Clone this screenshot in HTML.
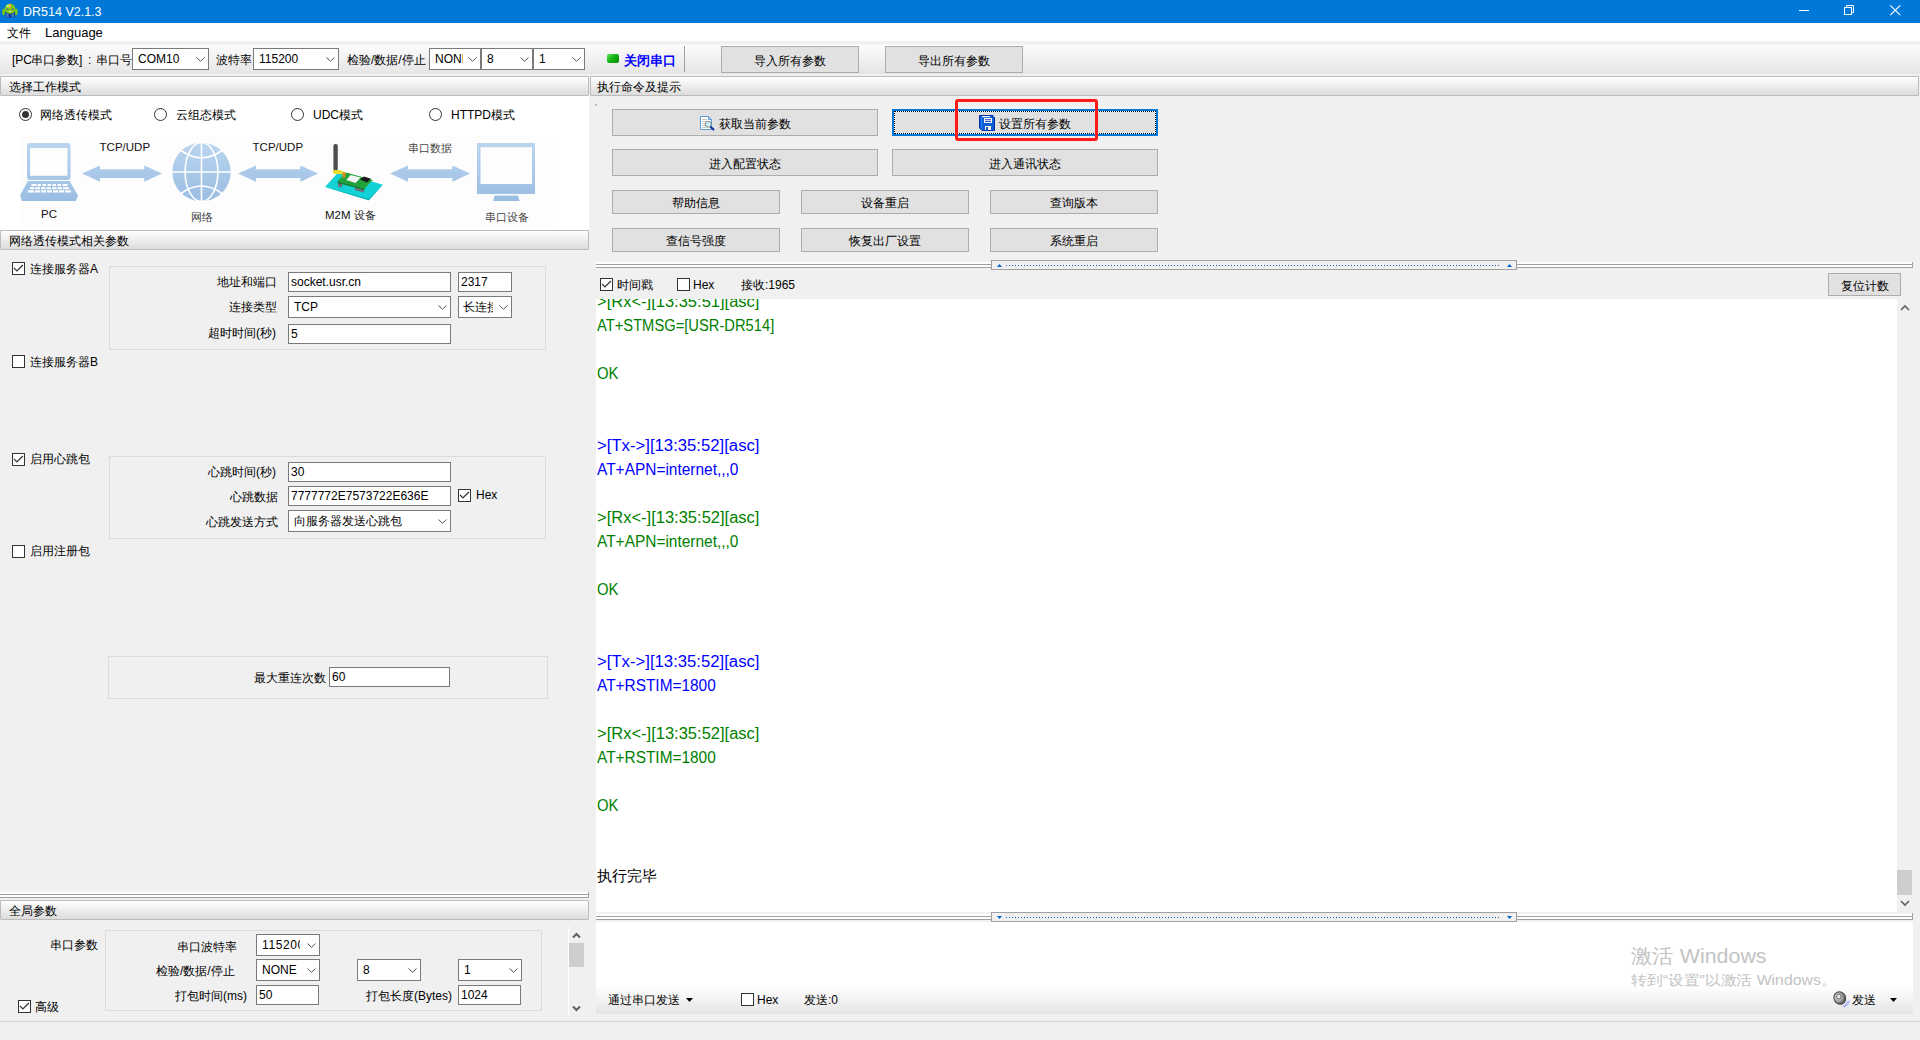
<!DOCTYPE html>
<html><head><meta charset="utf-8">
<style>
*{box-sizing:border-box}
html,body{margin:0;padding:0;width:1920px;height:1040px;overflow:hidden;background:#f0f0f0;font-family:"Liberation Sans",sans-serif;font-size:12px;color:#000}
.a{position:absolute}
.t{position:absolute;white-space:nowrap;line-height:12px;height:12px}
.hdr{position:absolute;height:20px;border:1px solid #bcbcbc;border-radius:1px;background:linear-gradient(#fefefe,#dddddd)}
.hdr span{position:absolute;left:8px;top:4px;line-height:12px;white-space:nowrap}
.btn{position:absolute;border:1px solid #adadad;background:#e1e1e1;text-align:center;white-space:nowrap}
.btn span{position:absolute;left:0;right:0;line-height:12px}
.cmb{position:absolute;border:1px solid #7a7a7a;background:#fff;white-space:nowrap;overflow:hidden}
.cmb span{position:absolute;left:5px;line-height:12px}
.cmb svg{position:absolute}
.inp{position:absolute;border:1px solid #7a7a7a;background:#fff;white-space:nowrap;overflow:hidden}
.inp span{position:absolute;left:3px;line-height:12px}
.chk{position:absolute;width:13px;height:13px;border:1px solid #333;background:#fff}
.rad{position:absolute;width:13px;height:13px;border:1px solid #333;border-radius:50%;background:#fff}
.grp{position:absolute;border:1px solid #dcdcdc}
.log{position:absolute;left:597px;white-space:nowrap;font-size:15px;line-height:24px;height:24px}
.g{color:#008000}.b{color:#0000ff}
</style></head><body><!-- title bar -->
<div class="a" style="left:0;top:0;width:1920px;height:23px;background:#0078d7"></div>
<svg class="a" style="left:0;top:0" width="22" height="22" viewBox="0 0 22 22">
<ellipse cx="3.7" cy="11.8" rx="1.5" ry="3.4" fill="#78c814"/><ellipse cx="16.2" cy="11.8" rx="1.5" ry="3.4" fill="#78c814"/>
<rect x="5.5" y="12" width="9.5" height="5.5" rx="1" fill="#173a96"/><rect x="6.2" y="13.5" width="2.3" height="3.5" fill="#4a86cc"/><rect x="11.6" y="13.5" width="2.3" height="3.5" fill="#4a86cc"/>
<ellipse cx="10" cy="8.7" rx="5.2" ry="5" fill="#7ccc10"/><ellipse cx="8.5" cy="6" rx="2" ry="1.2" fill="#c8f090"/>
<rect x="9.1" y="3.8" width="1.9" height="4" rx="0.8" fill="#f4a848"/>
<circle cx="7.5" cy="9.2" r="0.9" fill="#6a5ab0"/><circle cx="12.5" cy="9.2" r="0.9" fill="#6a5ab0"/>
<ellipse cx="9.9" cy="11.5" rx="1.2" ry="0.5" fill="#eee"/>
</svg>
<div class="t" style="left:23px;top:6px;color:#fff;font-size:12.5px;line-height:13px">DR514 V2.1.3</div>
<svg class="a" style="left:1790px;top:0" width="130" height="23" viewBox="0 0 130 23">
<rect x="9" y="10" width="10" height="1" fill="#fff"/>
<rect x="54.5" y="7.5" width="7" height="7" fill="none" stroke="#fff"/><path d="M56.5 7.5V5.5H63.5V12.5H61.5" fill="none" stroke="#fff"/>
<path d="M100.3 5.3L110.2 15.2M110.2 5.3L100.3 15.2" stroke="#fff" stroke-width="1.15"/></svg>
<!-- menu -->
<div class="a" style="left:0;top:23px;width:1920px;height:18px;background:#fff"></div>
<div class="t" style="left:7px;top:27px">文件</div>
<div class="t" style="left:45px;top:27px;font-size:13px">Language</div>
<!-- toolbar -->

<div class="a" style="left:0;top:41px;width:1920px;height:35px;background:linear-gradient(#f0f0f0 0,#f0f0f0 3px,#fcfcfc 4px,#e5e5e5 33px,#f0f0f0 33px)"></div>
<div class="t" style="left:12px;top:54px;">[PC</div>
<div class="t" style="left:31px;top:54px;">串口参数</div>
<div class="t" style="left:79px;top:54px;">]</div>
<div class="t" style="left:88px;top:54px;">:</div>
<div class="t" style="left:96px;top:54px;">串口号</div>
<div class="cmb" style="left:132px;top:48px;width:77px;height:22px"><span style="left:5px;top:4px;width:52px;overflow:hidden;">COM10</span><svg style="right:3px;top:8px" width="9" height="5" viewBox="0 0 9 5"><path d="M0.5 0.5L4.5 4.3L8.5 0.5" fill="none" stroke="#505050" stroke-width="1"/></svg></div>
<div class="t" style="left:216px;top:54px;">波特率</div>
<div class="cmb" style="left:253px;top:48px;width:86px;height:22px"><span style="left:5px;top:4px;width:61px;overflow:hidden;">115200</span><svg style="right:3px;top:8px" width="9" height="5" viewBox="0 0 9 5"><path d="M0.5 0.5L4.5 4.3L8.5 0.5" fill="none" stroke="#505050" stroke-width="1"/></svg></div>
<div class="t" style="left:347px;top:54px;">检验/数据/停止</div>
<div class="cmb" style="left:429px;top:48px;width:52px;height:22px"><span style="left:5px;top:4px;width:28px;overflow:hidden;">NONE</span><svg style="right:3px;top:8px" width="9" height="5" viewBox="0 0 9 5"><path d="M0.5 0.5L4.5 4.3L8.5 0.5" fill="none" stroke="#505050" stroke-width="1"/></svg></div>
<div class="cmb" style="left:481px;top:48px;width:52px;height:22px"><span style="left:5px;top:4px;width:27px;overflow:hidden;">8</span><svg style="right:3px;top:8px" width="9" height="5" viewBox="0 0 9 5"><path d="M0.5 0.5L4.5 4.3L8.5 0.5" fill="none" stroke="#505050" stroke-width="1"/></svg></div>
<div class="cmb" style="left:533px;top:48px;width:52px;height:22px"><span style="left:5px;top:4px;width:27px;overflow:hidden;">1</span><svg style="right:3px;top:8px" width="9" height="5" viewBox="0 0 9 5"><path d="M0.5 0.5L4.5 4.3L8.5 0.5" fill="none" stroke="#505050" stroke-width="1"/></svg></div>
<div class="a" style="left:607px;top:54px;width:12px;height:9px;border-radius:2px;background:linear-gradient(135deg,#5fe05f,#10b010 50%,#0a8a0a)"></div>
<div class="t" style="left:624px;top:54px;color:#0000ff;font-weight:bold;font-size:13px;line-height:13px;height:13px">关闭串口</div>
<div class="a" style="left:684px;top:46px;width:1px;height:26px;background:#a0a0a0"></div>
<div class="btn" style="left:721px;top:46px;width:138px;height:27px"></div>
<div class="t" style="left:754px;top:55px;">导入所有参数</div>
<div class="btn" style="left:885px;top:46px;width:138px;height:27px"></div>
<div class="t" style="left:918px;top:55px;">导出所有参数</div>
<div class="a" style="left:0;top:96px;width:589px;height:134px;background:#fff"></div>
<div class="hdr" style="left:0;top:76px;width:589px"><span>选择工作模式</span></div>
<div class="a" style="left:595px;top:104px;width:2px;height:2px;background:#b0b0b0;border-radius:1px"></div>
<div class="hdr" style="left:590px;top:76px;width:1329px"><span style="left:6px">执行命令及提示</span></div>
<div class="rad" style="left:19px;top:108px"><div class="a" style="left:2px;top:2px;width:7px;height:7px;border-radius:50%;background:#333"></div></div>
<div class="t" style="left:40px;top:109px;">网络透传模式</div>
<div class="rad" style="left:154px;top:108px"></div>
<div class="t" style="left:176px;top:109px;">云组态模式</div>
<div class="rad" style="left:291px;top:108px"></div>
<div class="t" style="left:313px;top:109px;">UDC模式</div>
<div class="rad" style="left:429px;top:108px"></div>
<div class="t" style="left:451px;top:109px;">HTTPD模式</div>
<svg class="a" style="left:0;top:130px" width="590" height="100" viewBox="0 130 590 100">
<defs><linearGradient id="lb" x1="0" y1="0" x2="0" y2="1"><stop offset="0" stop-color="#bad5ef"/><stop offset="1" stop-color="#9bbde3"/></linearGradient>
<linearGradient id="lbg" gradientUnits="userSpaceOnUse" x1="0" y1="143" x2="0" y2="201"><stop offset="0" stop-color="#bad5ef"/><stop offset="1" stop-color="#9bbde3"/></linearGradient></defs>
<rect x="20" y="136" width="533" height="93" fill="#fdfdfd"/>
<g fill="url(#lbg)">
<path d="M30 143H67.5A3 3 0 0 1 70.5 146V177A3 3 0 0 1 67.5 180H30A3 3 0 0 1 27 177V146A3 3 0 0 1 30 143ZM30 148V175.7H67.5V148Z" fill-rule="evenodd"/>
<path d="M27.8 181H69.5L78 195.5L76 201H22L20 195.5Z"/>
<path d="M82 173.6L100 165.4V169.3H144.3V165.4L162.1 173.6L144.3 181.8V177.9H100V181.8Z"/>
<path d="M238 173.6L256 165.4V169.3H300.3V165.4L318.1 173.6L300.3 181.8V177.9H256V181.8Z"/>
<path d="M390 173.6L408 165.4V169.3H452.3V165.4L470.1 173.6L452.3 181.8V177.9H408V181.8Z"/>
<circle cx="201.5" cy="172" r="29.2"/>
<path d="M477 143H535V194H477ZM480.5 147.2V184H532V147.2Z" fill-rule="evenodd"/>
<path d="M494.7 195.6H518L519.7 201H493Z"/>
</g>
<g fill="#fff">
<rect x="31.5" y="184" width="5" height="2"/><rect x="37.5" y="184" width="3.5" height="2"/><rect x="42.5" y="184" width="3.5" height="2"/><rect x="47.5" y="184" width="3.5" height="2"/><rect x="52.5" y="184" width="3.5" height="2"/><rect x="57.5" y="184" width="3.5" height="2"/><rect x="62.5" y="184" width="5" height="2"/>
<rect x="30" y="187.2" width="4.5" height="2"/><rect x="35.5" y="187.2" width="4.5" height="2"/><rect x="41" y="187.2" width="4.5" height="2"/><rect x="46.5" y="187.2" width="4.5" height="2"/><rect x="52" y="187.2" width="4.5" height="2"/><rect x="57.5" y="187.2" width="4.5" height="2"/><rect x="63" y="187.2" width="6" height="2"/>
<rect x="28" y="190.3" width="6" height="2.2"/><rect x="35" y="190.3" width="5" height="2.2"/><rect x="41" y="190.3" width="5" height="2.2"/><rect x="47" y="190.3" width="5" height="2.2"/><rect x="53" y="190.3" width="5" height="2.2"/><rect x="59" y="190.3" width="5" height="2.2"/><rect x="65" y="190.3" width="6" height="2.2"/>
</g>
<g fill="none" stroke="#fff" stroke-width="1.6">
<path d="M201.5 142V202M171 172H232"/>
<ellipse cx="201.5" cy="172" rx="16.4" ry="29.5"/>
<path d="M181 150.5Q201.5 165 222 150.5M181 193.5Q201.5 178.5 222 193.5"/>
</g>
<path d="M325 187L339 171.4L382.8 184.7L368.8 200.3Z" fill="#12d2d6"/>
<path d="M325 187L368.8 200.3L382.8 184.7L368.8 199Z" fill="#0aa8b0"/>
<path d="M338 183L342 183L342 187.5L338 186.5Z" fill="#6d6a7c"/>
<path d="M355 187L364 189.5L364 192.5L355 190Z" fill="#6d6a7c"/>
<path d="M337.5 181.3L346 172.5L372.8 180L364.7 188.5Z" fill="#22a33a"/>
<path d="M337.5 181.3L364.7 188.5L364.7 190L337.5 183Z" fill="#157a25"/>
<path d="M346.3 180L350.6 175L360.6 177.5L355.6 183.1Z" fill="#f4f4f4"/>
<path d="M360 179.5L364 176.5L371 178.8L367 182.5Z" fill="#1c1c1c"/>
<rect x="333.4" y="144" width="4.4" height="27" rx="2" fill="#4e4e4e"/>
<path d="M333 170L340 170L345.5 172.5L345.5 174.5L338 174L333 173.5Z" fill="#e8dc2a"/>
<rect x="342.5" y="172.5" width="3" height="5" fill="#d88a20"/>
<g font-family="Liberation Sans" font-size="11.5px" fill="#111">
<text x="99.6" y="151.2">TCP/UDP</text><text x="252.6" y="151.2">TCP/UDP</text>
<text x="41" y="217.5">PC</text><text x="325" y="218.5">M2M</text>
</g>
<g font-size="11px" fill="#444">
<text x="190.5" y="220.5">网络</text><text x="408" y="151.5">串口数据</text><text x="484.5" y="221">串口设备</text><text x="354" y="218.5" fill="#222">设备</text>
</g>
</svg>
<div class="hdr" style="left:0;top:230px;width:589px"><span>网络透传模式相关参数</span></div>
<div class="chk" style="left:12px;top:262px"><svg class="a" style="left:0;top:0" width="11" height="11" viewBox="0 0 11 11"><path d="M1 4.9L3.9 7.9L9.9 2" fill="none" stroke="#333" stroke-width="1.3"/></svg></div>
<div class="t" style="left:30px;top:263px;">连接服务器A</div>
<div class="grp" style="left:109px;top:266px;width:437px;height:84px"></div>
<div class="t" style="left:217px;top:276px;">地址和端口</div>
<div class="inp" style="left:288px;top:272px;width:163px;height:20px"><span style="left:2px;top:3px">socket.usr.cn</span></div>
<div class="inp" style="left:458px;top:272px;width:54px;height:20px"><span style="left:2px;top:3px">2317</span></div>
<div class="t" style="left:229px;top:301px;">连接类型</div>
<div class="cmb" style="left:288px;top:296px;width:163px;height:22px"><span style="left:5px;top:4px;width:138px;overflow:hidden;">TCP</span><svg style="right:3px;top:8px" width="9" height="5" viewBox="0 0 9 5"><path d="M0.5 0.5L4.5 4.3L8.5 0.5" fill="none" stroke="#505050" stroke-width="1"/></svg></div>
<div class="cmb" style="left:458px;top:296px;width:54px;height:22px"><span style="left:4px;top:4px;width:30px;overflow:hidden;">长连接</span><svg style="right:3px;top:8px" width="9" height="5" viewBox="0 0 9 5"><path d="M0.5 0.5L4.5 4.3L8.5 0.5" fill="none" stroke="#505050" stroke-width="1"/></svg></div>
<div class="t" style="left:208px;top:327px;">超时时间(秒)</div>
<div class="inp" style="left:288px;top:324px;width:163px;height:20px"><span style="left:2px;top:3px">5</span></div>
<div class="chk" style="left:12px;top:355px"></div>
<div class="t" style="left:30px;top:356px;">连接服务器B</div>
<div class="chk" style="left:12px;top:453px"><svg class="a" style="left:0;top:0" width="11" height="11" viewBox="0 0 11 11"><path d="M1 4.9L3.9 7.9L9.9 2" fill="none" stroke="#333" stroke-width="1.3"/></svg></div>
<div class="t" style="left:30px;top:453px;">启用心跳包</div>
<div class="grp" style="left:109px;top:456px;width:437px;height:83px"></div>
<div class="t" style="left:208px;top:466px;">心跳时间(秒)</div>
<div class="inp" style="left:288px;top:462px;width:163px;height:20px"><span style="left:2px;top:3px">30</span></div>
<div class="t" style="left:230px;top:491px;">心跳数据</div>
<div class="inp" style="left:288px;top:486px;width:163px;height:20px"><span style="left:2px;top:3px">7777772E7573722E636E</span></div>
<div class="chk" style="left:458px;top:489px"><svg class="a" style="left:0;top:0" width="11" height="11" viewBox="0 0 11 11"><path d="M1 4.9L3.9 7.9L9.9 2" fill="none" stroke="#333" stroke-width="1.3"/></svg></div>
<div class="t" style="left:476px;top:489px;">Hex</div>
<div class="t" style="left:206px;top:516px;">心跳发送方式</div>
<div class="cmb" style="left:288px;top:510px;width:163px;height:22px"><span style="left:5px;top:4px;width:138px;overflow:hidden;">向服务器发送心跳包</span><svg style="right:3px;top:8px" width="9" height="5" viewBox="0 0 9 5"><path d="M0.5 0.5L4.5 4.3L8.5 0.5" fill="none" stroke="#505050" stroke-width="1"/></svg></div>
<div class="chk" style="left:12px;top:545px"></div>
<div class="t" style="left:30px;top:545px;">启用注册包</div>
<div class="grp" style="left:108px;top:656px;width:440px;height:43px"></div>
<div class="t" style="left:254px;top:672px;">最大重连次数</div>
<div class="inp" style="left:329px;top:667px;width:121px;height:20px"><span style="left:2px;top:3px">60</span></div>
<div class="a" style="left:0;top:892px;width:588px;height:6px;background:linear-gradient(#fff 0,#fff 2px,#a0a0a0 2px,#a0a0a0 3px,#fff 3px,#fff 5px,#a0a0a0 5px)"></div>
<div class="a" style="left:588px;top:892px;width:1px;height:6px;background:#a0a0a0"></div>
<div class="hdr" style="left:0;top:900px;width:589px"><span>全局参数</span></div>
<div class="t" style="left:50px;top:939px;">串口参数</div>
<div class="grp" style="left:105px;top:930px;width:437px;height:81px"></div>
<div class="t" style="left:177px;top:941px;">串口波特率</div>
<div class="cmb" style="left:256px;top:934px;width:64px;height:22px"><span style="left:5px;top:4px;width:38px;overflow:hidden;letter-spacing:0.6px;">115200</span><svg style="right:3px;top:8px" width="9" height="5" viewBox="0 0 9 5"><path d="M0.5 0.5L4.5 4.3L8.5 0.5" fill="none" stroke="#505050" stroke-width="1"/></svg></div>
<div class="t" style="left:156px;top:965px;">检验/数据/停止</div>
<div class="cmb" style="left:256px;top:959px;width:64px;height:22px"><span style="left:5px;top:4px;width:39px;overflow:hidden;">NONE</span><svg style="right:3px;top:8px" width="9" height="5" viewBox="0 0 9 5"><path d="M0.5 0.5L4.5 4.3L8.5 0.5" fill="none" stroke="#505050" stroke-width="1"/></svg></div>
<div class="cmb" style="left:357px;top:959px;width:64px;height:22px"><span style="left:5px;top:4px;width:39px;overflow:hidden;">8</span><svg style="right:3px;top:8px" width="9" height="5" viewBox="0 0 9 5"><path d="M0.5 0.5L4.5 4.3L8.5 0.5" fill="none" stroke="#505050" stroke-width="1"/></svg></div>
<div class="cmb" style="left:458px;top:959px;width:64px;height:22px"><span style="left:5px;top:4px;width:39px;overflow:hidden;">1</span><svg style="right:3px;top:8px" width="9" height="5" viewBox="0 0 9 5"><path d="M0.5 0.5L4.5 4.3L8.5 0.5" fill="none" stroke="#505050" stroke-width="1"/></svg></div>
<div class="t" style="left:175px;top:990px;">打包时间(ms)</div>
<div class="inp" style="left:256px;top:985px;width:63px;height:20px"><span style="left:2px;top:3px">50</span></div>
<div class="t" style="left:366px;top:990px;">打包长度(Bytes)</div>
<div class="inp" style="left:458px;top:985px;width:63px;height:20px"><span style="left:2px;top:3px">1024</span></div>
<div class="chk" style="left:18px;top:1000px"><svg class="a" style="left:0;top:0" width="11" height="11" viewBox="0 0 11 11"><path d="M1 4.9L3.9 7.9L9.9 2" fill="none" stroke="#333" stroke-width="1.3"/></svg></div>
<div class="t" style="left:35px;top:1001px;">高级</div>
<div class="a" style="left:568px;top:926px;width:1px;height:90px;background:#fff"></div>
<div class="a" style="left:569px;top:943px;width:15px;height:24px;background:#cdcdcd"></div>
<svg class="a" style="left:572px;top:932px" width="10" height="7" viewBox="0 0 10 7"><path d="M1 5.5L4.5 2L8 5.5" fill="none" stroke="#606060" stroke-width="2"/></svg>
<svg class="a" style="left:572px;top:1005px" width="10" height="7" viewBox="0 0 10 7"><path d="M1 1.5L4.5 5L8 1.5" fill="none" stroke="#606060" stroke-width="2"/></svg>
<div class="a" style="left:0;top:1021px;width:1920px;height:1px;background:#d6d6d6"></div>
<div class="btn" style="left:612px;top:109px;width:266px;height:27px"></div>
<div class="t" style="left:719px;top:118px;">获取当前参数</div>
<svg class="a" style="left:699px;top:115px" width="17" height="17" viewBox="699 115 17 17">
<path d="M700.5 116.5H708.5L711.5 119.5V129.5H700.5Z" fill="#fff" stroke="#5b9bd5"/>
<path d="M708.5 116.5V119.5H711.5" fill="none" stroke="#5b9bd5"/>
<g fill="#c8c8c8"><rect x="702" y="119" width="5" height="1"/><rect x="702" y="121" width="4" height="1"/><rect x="702" y="123" width="3" height="1"/><rect x="702" y="125" width="3" height="1"/><rect x="702" y="127" width="4" height="1"/></g>
<circle cx="708.3" cy="124.3" r="3" fill="#c8f4f8" stroke="#808080" stroke-width="1"/>
<path d="M710.5 126.8L714 130" stroke="#0a2aa8" stroke-width="2.2"/>
</svg>
<div class="a" style="left:892px;top:109px;width:266px;height:27px;border:2px solid #0078d7;background:#e1e1e1"></div>
<div class="a" style="left:894px;top:111px;width:262px;height:23px;border:1px solid #fff"></div>
<div class="a" style="left:894px;top:111px;width:262px;height:23px;border:1px dotted #000"></div>
<div class="t" style="left:999px;top:118px;">设置所有参数</div>
<svg class="a" style="left:978px;top:114px" width="18" height="18" viewBox="978 114 18 18">
<path d="M979.5 115.5H993V117.5H994.5V130.5H982L979.5 128Z" fill="#0b5fd6" stroke="#0030a8"/>
<path d="M981.5 117.5V128.5" stroke="#2a7ae8"/>
<rect x="982" y="116" width="8" height="1.2" fill="#fff"/>
<rect x="984" y="118" width="8" height="5" fill="#fff"/><rect x="985" y="119.3" width="6" height="0.9" fill="#0030a8"/><rect x="985" y="121.2" width="6" height="0.9" fill="#0030a8"/>
<rect x="985" y="126" width="6" height="4" fill="#f4f0e8"/><rect x="986" y="127" width="2" height="3" fill="#0b5fd6"/>
</svg>
<div class="btn" style="left:612px;top:149px;width:266px;height:27px"><span style="top:8px">进入配置状态</span></div>
<div class="btn" style="left:892px;top:149px;width:266px;height:27px"><span style="top:8px">进入通讯状态</span></div>
<div class="btn" style="left:612px;top:190px;width:168px;height:24px"><span style="top:6px">帮助信息</span></div>
<div class="btn" style="left:801px;top:190px;width:168px;height:24px"><span style="top:6px">设备重启</span></div>
<div class="btn" style="left:990px;top:190px;width:168px;height:24px"><span style="top:6px">查询版本</span></div>
<div class="btn" style="left:612px;top:228px;width:168px;height:24px"><span style="top:6px">查信号强度</span></div>
<div class="btn" style="left:801px;top:228px;width:168px;height:24px"><span style="top:6px">恢复出厂设置</span></div>
<div class="btn" style="left:990px;top:228px;width:168px;height:24px"><span style="top:6px">系统重启</span></div>
<div class="a" style="left:596px;top:262px;width:1317px;height:6px;background:linear-gradient(#fff 0,#fff 2px,#a0a0a0 2px,#a0a0a0 3px,#fff 3px,#fff 5px,#a0a0a0 5px)"></div>
<div class="a" style="left:1912px;top:262px;width:1px;height:6px;background:#a0a0a0"></div>
<div class="a" style="left:991px;top:260px;width:526px;height:10px;border:1px solid #a0a0a0;background:#f0f0f0"></div><svg class="a" style="left:997px;top:264px" width="5" height="3" viewBox="0 0 5 3"><path d="M0 3H5L2.5 0Z" fill="#0066cc"/></svg><svg class="a" style="left:1507px;top:264px" width="5" height="3" viewBox="0 0 5 3"><path d="M0 3H5L2.5 0Z" fill="#0066cc"/></svg><div class="a" style="left:1006px;top:265px;width:495px;height:1px;background:repeating-linear-gradient(90deg,#0a6ad0 0,#0a6ad0 1px,transparent 1px,transparent 3px)"></div>
<div class="chk" style="left:600px;top:278px"><svg class="a" style="left:0;top:0" width="11" height="11" viewBox="0 0 11 11"><path d="M1 4.9L3.9 7.9L9.9 2" fill="none" stroke="#333" stroke-width="1.3"/></svg></div>
<div class="t" style="left:617px;top:279px;">时间戳</div>
<div class="chk" style="left:677px;top:278px"></div>
<div class="t" style="left:693px;top:279px;">Hex</div>
<div class="t" style="left:741px;top:279px;">接收:1965</div>
<div class="btn" style="left:1828px;top:273px;width:73px;height:23px"><span style="top:6px">复位计数</span></div>
<div class="a" style="left:596px;top:299px;width:1301px;height:613px;background:#fff;overflow:hidden">
<div class="log" style="left:1px;top:-9px;color:#008000;font-size:16px;transform:scaleX(1.032);transform-origin:0 0">&gt;[Rx&lt;-][13:35:51][asc]</div>
<div class="log" style="left:1px;top:15px;color:#008000;font-size:16px;transform:scaleX(0.92);transform-origin:0 0">AT+STMSG=[USR-DR514]</div>
<div class="log" style="left:1px;top:63px;color:#008000;font-size:16px;transform:scaleX(0.93);transform-origin:0 0">OK</div>
<div class="log" style="left:1px;top:135px;color:#0000ff;font-size:16px;transform:scaleX(1.044);transform-origin:0 0">&gt;[Tx-&gt;][13:35:52][asc]</div>
<div class="log" style="left:1px;top:159px;color:#0000ff;font-size:16px;transform:scaleX(0.966);transform-origin:0 0">AT+APN=internet,,,0</div>
<div class="log" style="left:1px;top:207px;color:#008000;font-size:16px;transform:scaleX(1.032);transform-origin:0 0">&gt;[Rx&lt;-][13:35:52][asc]</div>
<div class="log" style="left:1px;top:231px;color:#008000;font-size:16px;transform:scaleX(0.966);transform-origin:0 0">AT+APN=internet,,,0</div>
<div class="log" style="left:1px;top:279px;color:#008000;font-size:16px;transform:scaleX(0.93);transform-origin:0 0">OK</div>
<div class="log" style="left:1px;top:351px;color:#0000ff;font-size:16px;transform:scaleX(1.044);transform-origin:0 0">&gt;[Tx-&gt;][13:35:52][asc]</div>
<div class="log" style="left:1px;top:375px;color:#0000ff;font-size:16px;transform:scaleX(0.963);transform-origin:0 0">AT+RSTIM=1800</div>
<div class="log" style="left:1px;top:423px;color:#008000;font-size:16px;transform:scaleX(1.032);transform-origin:0 0">&gt;[Rx&lt;-][13:35:52][asc]</div>
<div class="log" style="left:1px;top:447px;color:#008000;font-size:16px;transform:scaleX(0.963);transform-origin:0 0">AT+RSTIM=1800</div>
<div class="log" style="left:1px;top:495px;color:#008000;font-size:16px;transform:scaleX(0.93);transform-origin:0 0">OK</div>
<div class="log" style="left:1px;top:565px;color:#000">执行完毕</div>
</div>
<div class="a" style="left:1897px;top:299px;width:16px;height:613px;background:#f0f0f0"></div>
<div class="a" style="left:1897px;top:870px;width:15px;height:25px;background:#cdcdcd"></div>
<svg class="a" style="left:1900px;top:304px" width="10" height="7" viewBox="0 0 10 7"><path d="M1 6L5 2L9 6" fill="none" stroke="#606060" stroke-width="1.6"/></svg>
<svg class="a" style="left:1900px;top:900px" width="10" height="7" viewBox="0 0 10 7"><path d="M1 1L5 5L9 1" fill="none" stroke="#606060" stroke-width="1.6"/></svg>
<div class="a" style="left:596px;top:914px;width:1317px;height:6px;background:linear-gradient(#fff 0,#fff 2px,#a0a0a0 2px,#a0a0a0 3px,#fff 3px,#fff 5px,#a0a0a0 5px)"></div>
<div class="a" style="left:1912px;top:913px;width:1px;height:7px;background:#a0a0a0"></div>
<div class="a" style="left:991px;top:912px;width:526px;height:10px;border:1px solid #a0a0a0;background:#f0f0f0"></div><svg class="a" style="left:997px;top:916px" width="5" height="3" viewBox="0 0 5 3"><path d="M0 0H5L2.5 3Z" fill="#0066cc"/></svg><svg class="a" style="left:1507px;top:916px" width="5" height="3" viewBox="0 0 5 3"><path d="M0 0H5L2.5 3Z" fill="#0066cc"/></svg><div class="a" style="left:1006px;top:917px;width:495px;height:1px;background:repeating-linear-gradient(90deg,#0a6ad0 0,#0a6ad0 1px,transparent 1px,transparent 3px)"></div>
<div class="a" style="left:596px;top:922px;width:1317px;height:92px;background:linear-gradient(#fff 0,#fff 64px,#f4f4f4 76px,#e4e4e4 92px)"></div>
<div class="t" style="left:608px;top:994px;">通过串口发送</div>
<svg class="a" style="left:686px;top:998px" width="7" height="4" viewBox="0 0 7 4"><path d="M0 0H7L3.5 4Z" fill="#000"/></svg>
<div class="chk" style="left:741px;top:993px"></div>
<div class="t" style="left:757px;top:994px;">Hex</div>
<div class="t" style="left:804px;top:994px;">发送:0</div>
<div class="t" style="left:1852px;top:994px;">发送</div>
<svg class="a" style="left:1832px;top:990px" width="20" height="18" viewBox="0 0 20 18">
<defs><radialGradient id="spk" cx="0.4" cy="0.35" r="0.7"><stop offset="0" stop-color="#f4f4f4"/><stop offset="0.5" stop-color="#a8a8a8"/><stop offset="1" stop-color="#3c3c3c"/></radialGradient></defs>
<ellipse cx="7.8" cy="8" rx="5.8" ry="6.4" transform="rotate(-25 7.8 8)" fill="url(#spk)" stroke="#4a4a4a" stroke-width="1"/>
<ellipse cx="6.8" cy="6.6" rx="2.2" ry="2.4" fill="#e8e8e8" stroke="#555" stroke-width="0.8"/>
<path d="M10.5 16.5Q14.5 15 16 11M12 17.2Q16.5 15.5 17.6 10.5" fill="none" stroke="#8a8cff" stroke-width="0.9"/>
</svg>
<svg class="a" style="left:1890px;top:998px" width="7" height="4" viewBox="0 0 7 4"><path d="M0 0H7L3.5 4Z" fill="#000"/></svg>
<div class="t" style="left:1631px;top:946px;font-size:20px;line-height:20px;height:20px;color:#c3c3c3;transform:scaleX(1.07);transform-origin:0 0">激活 Windows</div>
<div class="t" style="left:1631px;top:973px;font-size:14px;line-height:14px;height:14px;color:#c3c3c3;transform:scaleX(1.13);transform-origin:0 0">转到“设置”以激活 Windows。</div>
<div class="a" style="left:955px;top:99px;width:143px;height:42px;border:3px solid #ff1a1a;border-radius:3px"></div>
</body></html>
